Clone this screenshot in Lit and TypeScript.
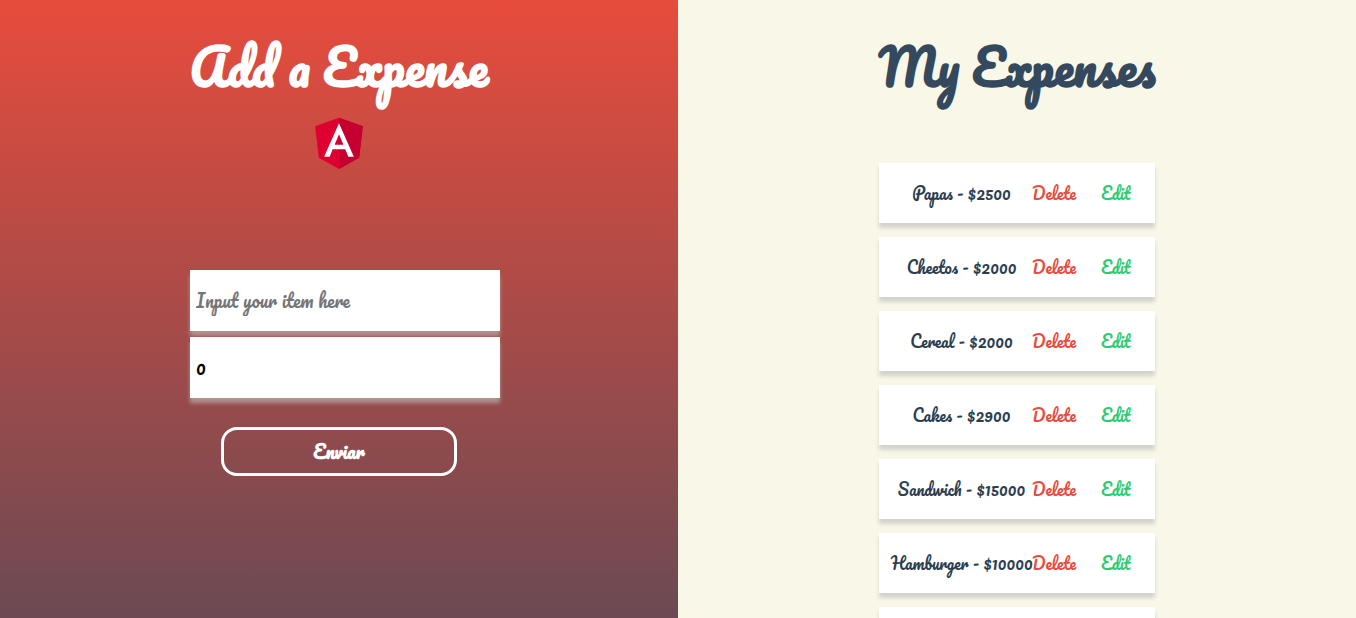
import { LitElement, html, css, svg } from "lit";
import { customElement, state } from "lit/decorators.js";

interface Expense {
  name: string;
  amount: number;
}

const angularLogo = svg`
  <path fill="#dd0031" d="M125 30 31.900 63.200 46.100 186.300 125 230 203.900 186.300 218.100 63.200z"/>
  <path fill="#c3002f" d="M125 30v22.200-.1V230l78.900-43.700 14.200-123.100z"/>
  <path fill="#fff" d="M125 52.100 66.800 182.600h21.700l11.700-29.200h49.400l11.700 29.200H183zm17 83.300h-34l17-40.900z"/>
`;

@customElement("app-root")
export class AppRoot extends LitElement {
  @state() private expenses: Expense[] = [
    { name: "Papas", amount: 2500 },
    { name: "Cheetos", amount: 2000 },
    { name: "Cereal", amount: 2000 },
    { name: "Cakes", amount: 2900 },
    { name: "Sandwich", amount: 15000 },
    { name: "Hamburger", amount: 10000 },
  ];

  static styles = css`
    :host {
      display: grid;
      grid-template-columns: 1fr 1fr;
      height: 100vh;
      overflow: hidden;
      font-family: Pacifico, Lato, sans-serif;
      font-size: 16px;
    }
    * {
      box-sizing: border-box;
    }
    .panel {
      display: flex;
      flex-direction: column;
      align-items: center;
      min-height: 0;
      padding-top: 24px;
    }
    .add {
      background: linear-gradient(#e74c3c, #34495e 145%);
    }
    .list {
      background: #f9f7e8;
    }
    h1 {
      margin: 0;
      font-size: 48px;
      line-height: 86px;
      font-weight: bold;
      white-space: nowrap;
    }
    .add h1 {
      color: #fff;
    }
    .list h1 {
      color: #34495e;
    }
    .logo {
      width: 64px;
      height: 64px;
    }
    form {
      display: flex;
      flex-direction: column;
      align-items: flex-start;
      gap: 6px;
      width: 298px;
      margin-top: 96px;
    }
    input {
      flex: none;
      width: 310px;
      height: 61px;
      padding: 0 6px;
      border: 0;
      border-radius: 0;
      background: #fff;
      color: #000;
      font: inherit;
      font-size: 18px;
      box-shadow: 0 5px 4px #b09490;
    }
    input::placeholder {
      color: #757575;
    }
    form button {
      align-self: center;
      width: 236px;
      height: 49px;
      margin-top: 23px;
      border: 3px solid #fff;
      border-radius: 16px;
      background: transparent;
      color: #fff;
      font: inherit;
      font-size: 18px;
      font-weight: bold;
    }
    ul {
      list-style: none;
      margin: 53px 0 0;
      padding: 0;
      display: flex;
      flex-direction: column;
      gap: 14px;
    }
    li {
      display: grid;
      grid-template-columns: 141px 44px 1fr;
      align-items: center;
      width: 276px;
      height: 60px;
      flex: none;
      padding-left: 12px;
      background: #fff;
      color: #2c3e50;
      box-shadow: 0 5px 4px #d3d3cc;
    }
    .item {
      text-align: center;
      white-space: nowrap;
    }
    li button {
      padding: 0;
      border: 0;
      background: none;
      font: inherit;
      text-align: left;
      cursor: pointer;
    }
    .delete {
      color: #e74c3c;
    }
    .edit {
      color: #2ecc71;
      margin-left: 25px;
    }
  `;

  render() {
    return html`
      <section class="panel add">
        <h1>Add a Expense</h1>
        <svg class="logo" viewBox="0 0 250 250" role="img" aria-label="Angular">${angularLogo}</svg>
        <form @submit=${(e: Event) => e.preventDefault()}>
          <input type="text" aria-label="Item" placeholder="Input your item here" />
          <input type="text" inputmode="numeric" aria-label="Amount" value="0" />
          <button type="submit">Enviar</button>
        </form>
      </section>
      <section class="panel list">
        <h1>My Expenses</h1>
        <ul>
          ${this.expenses.map(
            (e) => html`<li>
              <span class="item">${e.name} - $${e.amount}</span>
              <button class="delete" type="button">Delete</button>
              <button class="edit" type="button">Edit</button>
            </li>`
          )}
          <li></li>
        </ul>
      </section>
    `;
  }
}
